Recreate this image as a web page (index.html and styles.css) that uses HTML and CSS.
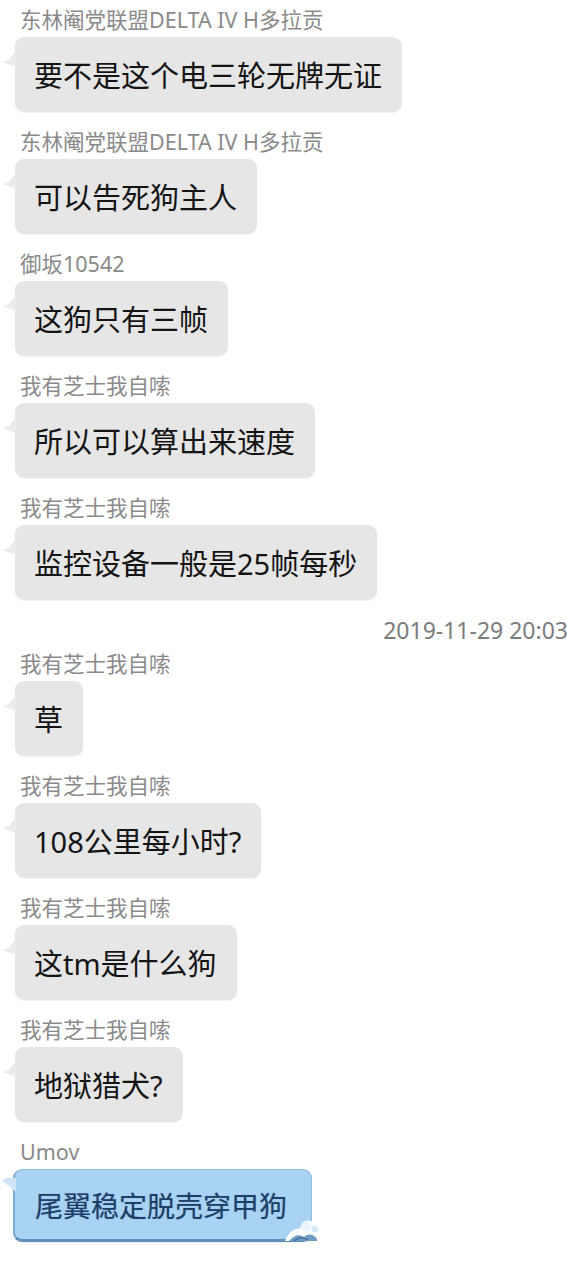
FILE: index.html
```html
<!DOCTYPE html>
<html lang="zh-CN">
<head>
    <meta charset="UTF-8">
    <meta name="viewport" content="width=device-width, initial-scale=1.0">
    <title>群聊记录</title>
    <link rel="stylesheet" href="styles.css">
</head>
<body>
    <div class="chat">
        <div class="message">
            <div class="name">东林阉党联盟DELTA IV H多拉贡</div>
            <div class="bubble">要不是这个电三轮无牌无证</div>
        </div>
        <div class="message">
            <div class="name">东林阉党联盟DELTA IV H多拉贡</div>
            <div class="bubble">可以告死狗主人</div>
        </div>
        <div class="message">
            <div class="name">御坂10542</div>
            <div class="bubble">这狗只有三帧</div>
        </div>
        <div class="message">
            <div class="name">我有芝士我自嗦</div>
            <div class="bubble">所以可以算出来速度</div>
        </div>
        <div class="message">
            <div class="name">我有芝士我自嗦</div>
            <div class="bubble">监控设备一般是25帧每秒</div>
        </div>

        <div class="timestamp">2019-11-29 20:03</div>

        <div class="message">
            <div class="name">我有芝士我自嗦</div>
            <div class="bubble">草</div>
        </div>
        <div class="message">
            <div class="name">我有芝士我自嗦</div>
            <div class="bubble">108公里每小时?</div>
        </div>
        <div class="message">
            <div class="name">我有芝士我自嗦</div>
            <div class="bubble">这tm是什么狗</div>
        </div>
        <div class="message">
            <div class="name">我有芝士我自嗦</div>
            <div class="bubble">地狱猎犬?</div>
        </div>
        <div class="message">
            <div class="name">Umov</div>
            <div class="bubble bubble-blue">
                尾翼稳定脱壳穿甲狗
                <svg class="splash" width="40" height="30" viewBox="0 0 40 30">
                    <path d="M2 30 C6 21 11 17 17 18 C19 9 27 7 31 13 C35 12 39 16 38 22 L38 30 Z" fill="#ffffff"/>
                    <circle cx="23" cy="15" r="5" fill="#eaf5fc"/>
                    <circle cx="32" cy="18" r="3.5" fill="#d5e9f6"/>
                    <circle cx="14" cy="21" r="2.5" fill="#f2f8fc"/>
                    <path d="M6 30 C11 24 16 23 21 26 C25 22 31 23 34 28 L34 30 Z" fill="#6f9cc2"/>
                    <path d="M11 30 C15 26 20 26 25 29" stroke="#3f6f99" stroke-width="1.2" fill="none"/>
                </svg>
            </div>
        </div>
    </div>
</body>
</html>
```

FILE: styles.css
```css
html, body {
    margin: 0;
    padding: 0;
    background-color: #ffffff;
    overflow-x: hidden;
}

body {
    font-family: "Noto Sans", "Noto Sans CJK SC", sans-serif;
    color: #111;
}

.chat {
    padding-top: 8px;
}

.message {
    display: flex;
    flex-direction: column;
    align-items: flex-start;
    margin-bottom: 18px;
}

.name {
    font-size: 21.5px;
    line-height: 24px;
    height: 24px;
    color: #8a8a8a;
    padding-left: 20px;
    margin-bottom: 5px;
    white-space: nowrap;
}

.bubble {
    position: relative;
    margin-left: 15px;
    height: 75px;
    box-sizing: border-box;
    display: flex;
    align-items: center;
    padding: 0 20px 2px 19px;
    font-size: 29px;
    color: #141414;
    background-color: #e6e6e6;
    border-radius: 9px;
    box-shadow: 0 1px 1px rgba(0, 0, 0, 0.05);
    white-space: nowrap;
}

/* little tail on the left side */
.bubble::before {
    content: "";
    position: absolute;
    left: -12px;
    top: 14px;
    width: 13px;
    height: 16px;
    background-color: #ebebeb;
    clip-path: polygon(100% 0, 100% 100%, 0 70%, 40% 60%);
}

.bubble-blue {
    margin-left: 13px;
    height: 73px;
    background-color: #a8d3f3;
    border: 1px solid #8fbde0;
    border-bottom: 3px solid #5f8fba;
    border-left: 2px solid #7aa8d0;
    color: #1d3f68;
    font-size: 28px;
    padding: 0 24px 0 20px;
    text-shadow: 0 0 1px rgba(29, 63, 104, 0.4);
}

.bubble-blue::before {
    left: -13px;
    top: 8px;
    background-color: #d0e6f6;
    width: 14px;
    height: 14px;
    clip-path: polygon(100% 0, 100% 100%, 0 20%, 30% 0);
}

.splash {
    position: absolute;
    right: -12px;
    bottom: -2px;
}

.timestamp {
    height: 32px;
    line-height: 32px;
    margin-top: -4px;
    margin-bottom: 6px;
    font-size: 23px;
    color: #7c7c7c;
    text-align: right;
    white-space: nowrap;
    margin-right: -1px;
}
```
